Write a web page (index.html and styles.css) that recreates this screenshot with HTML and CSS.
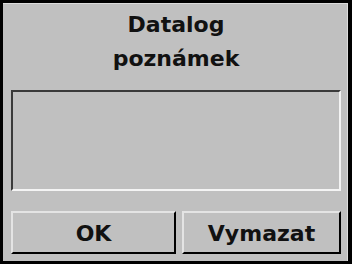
FILE: index.html
```html
<!DOCTYPE html>
<html lang="cs">
<head>
    <meta charset="UTF-8">
    <title>Datalog poznámek</title>
    <link rel="stylesheet" href="styles.css">
</head>
<body>
    <div class="dialog">
        <h1 class="dialog-title">Datalog<br>poznámek</h1>
        <div class="note-box"></div>
        <div class="button-row">
            <button class="btn btn-ok">OK</button>
            <button class="btn btn-clear">Vymazat</button>
        </div>
    </div>
</body>
</html>
```

FILE: styles.css
```css
* {
    box-sizing: border-box;
    margin: 0;
    padding: 0;
}

body {
    background: #000;
    font-family: "DejaVu Sans", Verdana, sans-serif;
}

/* Dialog window */
.dialog {
    width: 352px;
    height: 264px;
    background: #c0c0c0;
    border: 3px solid #000;
    border-right-width: 4px;
    padding: 5px 7px 0 8px;
    box-shadow: inset -1px 1px 0 #dcdcdc;
}

.dialog-title {
    font-size: 22px;
    font-weight: bold;
    line-height: 34px;
    text-align: center;
    color: #111;
}

/* Sunken note area */
.note-box {
    height: 101px;
    margin-top: 14px;
    background: #c0c0c0;
    border: 2px solid;
    border-color: #3a3a3a #f4f4f4 #f4f4f4 #3a3a3a;
}

/* Buttons */
.button-row {
    display: grid;
    grid-template-columns: 165px 159px;
    gap: 6px;
    margin-top: 20px;
}

.btn {
    height: 43px;
    background: #c0c0c0;
    border: 2px solid;
    border-color: #e4e4e4 #000 #000 #e4e4e4;
    font-family: "DejaVu Sans", Verdana, sans-serif;
    font-size: 22px;
    font-weight: bold;
    color: #111;
    padding-top: 2px;
}
```
